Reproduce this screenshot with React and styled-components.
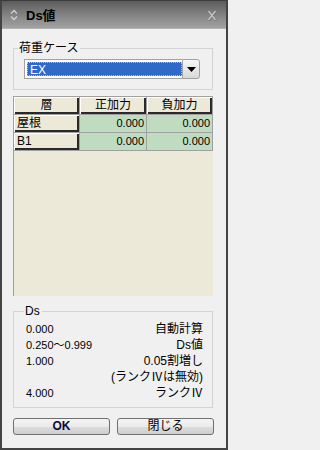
import React from "react";
import styled, { createGlobalStyle } from "styled-components";

const rows = [
  { name: "屋根", plus: "0.000", minus: "0.000" },
  { name: "B1", plus: "0.000", minus: "0.000" },
];

const dsRows = [
  ["0.000", "自動計算"],
  ["0.250〜0.999", "Ds値"],
  ["1.000", "0.05割増し"],
  ["", "(ランクⅣは無効)"],
  ["4.000", "ランクⅣ"],
];

const App = () => {
  return (
    <Frame>
      <GlobalStyle />
      <TitleBar>
        <svg width="8" height="12" viewBox="0 0 8 12">
          <path d="M1 4.5 L4 1.5 L7 4.5" fill="none" stroke="#d0d0d0" strokeWidth="1.4" />
          <path d="M1 7.5 L4 10.5 L7 7.5" fill="none" stroke="#d0d0d0" strokeWidth="1.4" />
        </svg>
        <Title>Ds値</Title>
        <CloseIcon width="10" height="11" viewBox="0 0 10 11">
          <path d="M1.5 1 L8.5 10 M8.5 1 L1.5 10" stroke="#6a6a6a" strokeWidth="2" transform="translate(0.5 0.6)" />
          <path d="M1.5 1 L8.5 10 M8.5 1 L1.5 10" stroke="#bdbdbd" strokeWidth="1.7" />
        </CloseIcon>
      </TitleBar>

      <Body>
        <Group $pad="4px 12px 10px 10px">
          <Legend $shift="-6px">荷重ケース</Legend>
          <Combo>
            <ComboField>
              <Selected>EX</Selected>
            </ComboField>
            <ComboButton>
              <svg width="9" height="5" viewBox="0 0 9 5">
                <path d="M0 0 L9 0 L4.5 5 Z" fill="#000" />
              </svg>
            </ComboButton>
          </Combo>
        </Group>

        <Table>
          <HeadCell $align="center">層</HeadCell>
          <HeadCell $align="center">正加力</HeadCell>
          <HeadCell $align="center">負加力</HeadCell>
          {rows.map((r) => (
            <React.Fragment key={r.name}>
              <HeadCell $align="left">{r.name}</HeadCell>
              <DataCell>{r.plus}</DataCell>
              <DataCell>{r.minus}</DataCell>
            </React.Fragment>
          ))}
        </Table>

        <Group $pad="3px 9px 6px 12px" $top="8px">
          <Legend $shift="-2px">Ds</Legend>
          {dsRows.map(([v, label], i) => (
            <DsRow key={i}>
              <span>{v}</span>
              <DsLabel>{label}</DsLabel>
            </DsRow>
          ))}
        </Group>

        <Buttons>
          <Button $bold>OK</Button>
          <Button>閉じる</Button>
        </Buttons>
      </Body>
    </Frame>
  );
};

export default App;

const GlobalStyle = createGlobalStyle`
  html, body {
    margin: 0;
    padding: 0;
    background: #f0f0f0;
  }
  * {
    box-sizing: border-box;
  }
`;

const Frame = styled.div`
  width: 228px;
  height: 450px;
  border: 2px solid #444;
  border-top: 1px solid #3a3a3a;
  background: #f0f0f0;
  display: flex;
  flex-direction: column;
  font-family: "Liberation Sans", "Noto Sans CJK JP", sans-serif;
  font-size: 12px;
  color: #000;
`;

const TitleBar = styled.div`
  height: 28px;
  flex-shrink: 0;
  display: flex;
  align-items: center;
  padding: 0 9px 0 8px;
  background: linear-gradient(#5c5c5c, #858585 55%, #a2a2a2);
  border-bottom: 1px solid #b4b4b4;
`;

const Title = styled.div`
  margin-left: 8px;
  font-family: "Liberation Sans", "Noto Sans CJK JP", sans-serif;
  font-weight: bold;
  font-size: 13px;
  color: #000;
  flex: 1;
`;

const CloseIcon = styled.svg`
  margin-top: 2px;
`;

const Body = styled.div`
  flex: 1;
  display: flex;
  flex-direction: column;
  padding: 12px 13px 0 11px;
`;

const Group = styled.fieldset`
  margin: ${(p) => p.$top || "0"} 0 0 0;
  padding: ${(p) => p.$pad};
  border: 1px solid #d3d3d3;
  min-width: 0;
`;

const Legend = styled.legend`
  margin-left: ${(p) => p.$shift};
  padding: 0 2px 0 1px;
  line-height: 14px;
  font-size: 12px;
`;

const Combo = styled.div`
  display: flex;
  height: 20px;
  width: 176px;
`;

const ComboField = styled.div`
  flex: 1;
  border: 1px solid #a2a2a2;
  border-right: none;
  background: #fff;
  padding: 2px 0 2px 2px;
`;

const Selected = styled.div`
  height: 100%;
  background: #3169c6;
  color: #fff;
  line-height: 14px;
  padding-left: 2px;
  outline: 1px dotted #f0c040;
  outline-offset: -1px;
  border: 1px dotted #000;
`;

const ComboButton = styled.div`
  width: 18px;
  display: flex;
  align-items: center;
  justify-content: center;
  border: 1px solid #a2a2a2;
  border-radius: 0 3px 3px 0;
  background: linear-gradient(#f6f6f6, #e8e8e8 50%, #d8d8d8);
`;

const Table = styled.div`
  margin-top: 6px;
  width: 200px;
  height: 200px;
  flex-shrink: 0;
  display: grid;
  grid-template-columns: 66px 67px 66px;
  grid-auto-rows: 18px;
  align-content: start;
  border-top: 1px solid #a0a0a0;
  border-left: 1px solid #a0a0a0;
  background: #ece9d8;
`;

const HeadCell = styled.div`
  background: #ece9d8;
  border-right: 1px solid #a0a0a0;
  border-bottom: 1px solid #a0a0a0;
  box-shadow: inset 1px 1px #fff, inset -2px -2px #2a2a2a;
  text-align: ${(p) => p.$align};
  padding: 0 3px;
  line-height: 16px;
  white-space: nowrap;
`;

const DataCell = styled.div`
  background: #c0dcc0;
  border-right: 1px solid #a0a0a0;
  border-bottom: 1px solid #a0a0a0;
  text-align: right;
  padding-right: 2px;
  line-height: 17px;
  font-size: 11px;
`;

const DsRow = styled.div`
  display: flex;
  justify-content: space-between;
  align-items: center;
  height: 16px;
  line-height: 16px;
  font-size: 11px;
  white-space: nowrap;
`;

const DsLabel = styled.span`
  font-size: 12px;
`;

const Buttons = styled.div`
  margin-top: 10px;
  display: flex;
  gap: 7px;
  width: 201px;
`;

const Button = styled.button`
  flex: 1;
  height: 17px;
  padding: 0;
  border: 1px solid #707070;
  border-radius: 3px;
  background: linear-gradient(#f4f4f4, #ebebeb 50%, #dddddd 51%, #cfcfcf);
  font-family: "Liberation Sans", "Noto Sans CJK JP", sans-serif;
  font-size: 12px;
  font-weight: ${(p) => (p.$bold ? "bold" : "normal")};
  color: ${(p) => (p.$bold ? "#0a0a3a" : "#000")};
  line-height: 15px;
`;
